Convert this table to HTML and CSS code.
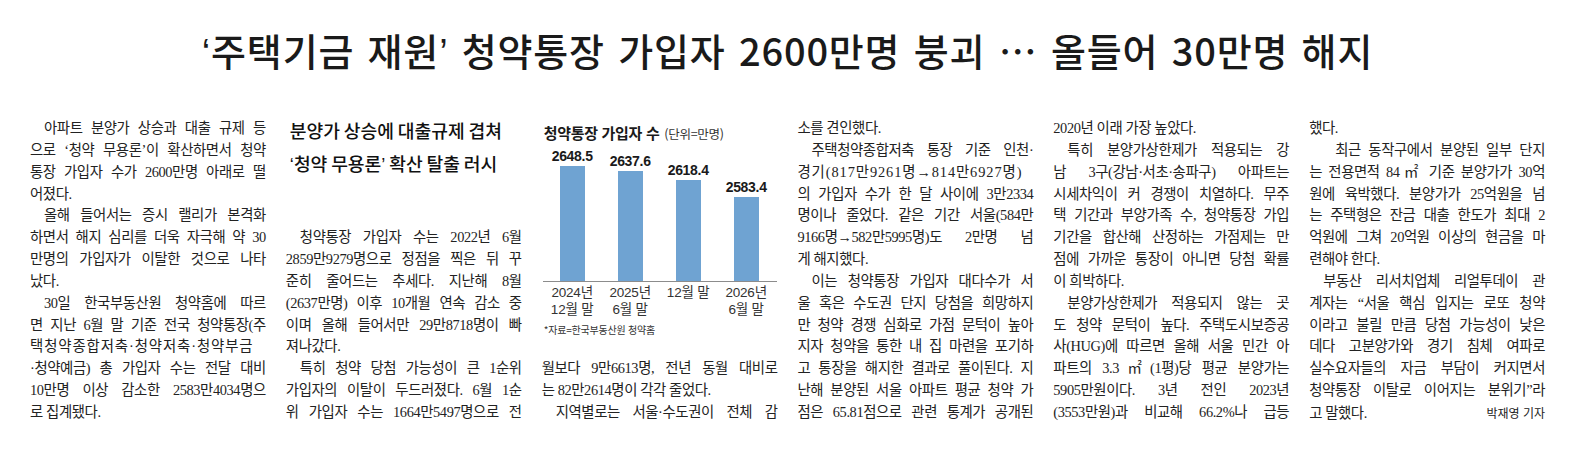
FILE: index.html
```html
<!DOCTYPE html>
<html lang="ko">
<head>
<meta charset="utf-8">
<title>청약통장 가입자 2600만명 붕괴</title>
<link rel="stylesheet" href="styles.css">
</head>
<body>
<div class="page">
  <h1 class="headline"><span class="q">‘</span>주택기금 재원<span class="q">’</span> 청약통장 가입자 2600만명 붕괴 … 올들어 30만명 해지</h1>
  <div class="columns">
    <div class="col">
      <span class="ln ind">아파트 분양가 상승과 대출 규제 등</span>
      <span class="ln">으로 ‘청약 무용론’이 확산하면서 청약</span>
      <span class="ln">통장 가입자 수가 2600만명 아래로 떨</span>
      <span class="ln end">어졌다.</span>
      <span class="ln ind">올해 들어서는 증시 랠리가 본격화</span>
      <span class="ln">하면서 해지 심리를 더욱 자극해 약 30</span>
      <span class="ln">만명의 가입자가 이탈한 것으로 나타</span>
      <span class="ln end">났다.</span>
      <span class="ln ind">30일 한국부동산원 청약홈에 따르</span>
      <span class="ln">면 지난 6월 말 기준 전국 청약통장(주</span>
      <span class="ln spread-lg">택청약종합저축·청약저축·청약부금</span>
      <span class="ln">·청약예금) 총 가입자 수는 전달 대비</span>
      <span class="ln">10만명 이상 감소한 2583만4034명으</span>
      <span class="ln end">로 집계됐다.</span>
    </div>
    <div class="col">
      <h2 class="subhead">분양가 상승에 대출규제 겹쳐<br><span class="q">‘</span>청약 무용론<span class="q">’</span> 확산 탈출 러시</h2>
      <span class="ln ind">청약통장 가입자 수는 2022년 6월</span>
      <span class="ln">2859만9279명으로 정점을 찍은 뒤 꾸</span>
      <span class="ln">준히 줄어드는 추세다. 지난해 8월</span>
      <span class="ln">(2637만명) 이후 10개월 연속 감소 중</span>
      <span class="ln">이며 올해 들어서만 29만8718명이 빠</span>
      <span class="ln end">져나갔다.</span>
      <span class="ln ind">특히 청약 당첨 가능성이 큰 1순위</span>
      <span class="ln">가입자의 이탈이 두드러졌다. 6월 1순</span>
      <span class="ln">위 가입자 수는 1664만5497명으로 전</span>
    </div>
    <div class="col">
      <div class="chart">
        <div class="chart-title">청약통장 가입자 수 <span class="unit">(단위=만명)</span></div>
        <div class="plot">
          <div class="bar-item"><span class="val">2648.5</span><div class="bar" style="height:115px"></div></div>
          <div class="bar-item"><span class="val">2637.6</span><div class="bar" style="height:110px"></div></div>
          <div class="bar-item"><span class="val">2618.4</span><div class="bar" style="height:101px"></div></div>
          <div class="bar-item"><span class="val">2583.4</span><div class="bar" style="height:84px"></div></div>
        </div>
        <div class="xlabels">
          <div class="xl">2024년<br>12월 말</div>
          <div class="xl">2025년<br>6월 말</div>
          <div class="xl">12월 말</div>
          <div class="xl">2026년<br>6월 말</div>
        </div>
        <div class="source">*자료=한국부동산원 청약홈</div>
      </div>
      <span class="ln">월보다 9만6613명, 전년 동월 대비로</span>
      <span class="ln end">는 82만2614명이 각각 줄었다.</span>
      <span class="ln ind">지역별로는 서울·수도권이 전체 감</span>
    </div>
    <div class="col">
      <span class="ln end">소를 견인했다.</span>
      <span class="ln ind">주택청약종합저축 통장 기준 인천·</span>
      <span class="ln spread">경기(817만9261명→814만6927명)</span>
      <span class="ln">의 가입자 수가 한 달 사이에 3만2334</span>
      <span class="ln">명이나 줄었다. 같은 기간 서울(584만</span>
      <span class="ln">9166명→582만5995명)도 2만명 넘</span>
      <span class="ln end">게 해지했다.</span>
      <span class="ln ind">이는 청약통장 가입자 대다수가 서</span>
      <span class="ln">울 혹은 수도권 단지 당첨을 희망하지</span>
      <span class="ln">만 청약 경쟁 심화로 가점 문턱이 높아</span>
      <span class="ln">지자 청약을 통한 내 집 마련을 포기하</span>
      <span class="ln">고 통장을 해지한 결과로 풀이된다. 지</span>
      <span class="ln">난해 분양된 서울 아파트 평균 청약 가</span>
      <span class="ln">점은 65.81점으로 관련 통계가 공개된</span>
    </div>
    <div class="col">
      <span class="ln end">2020년 이래 가장 높았다.</span>
      <span class="ln ind">특히 분양가상한제가 적용되는 강</span>
      <span class="ln">남 3구(강남·서초·송파구) 아파트는</span>
      <span class="ln">시세차익이 커 경쟁이 치열하다. 무주</span>
      <span class="ln">택 기간과 부양가족 수, 청약통장 가입</span>
      <span class="ln">기간을 합산해 산정하는 가점제는 만</span>
      <span class="ln">점에 가까운 통장이 아니면 당첨 확률</span>
      <span class="ln end">이 희박하다.</span>
      <span class="ln ind">분양가상한제가 적용되지 않는 곳</span>
      <span class="ln">도 청약 문턱이 높다. 주택도시보증공</span>
      <span class="ln">사(HUG)에 따르면 올해 서울 민간 아</span>
      <span class="ln">파트의 3.3㎡(1평)당 평균 분양가는</span>
      <span class="ln">5905만원이다. 3년 전인 2023년</span>
      <span class="ln">(3553만원)과 비교해 66.2%나 급등</span>
    </div>
    <div class="col">
      <span class="ln end">했다.</span>
      <span class="ln ind wide">최근 동작구에서 분양된 일부 단지</span>
      <span class="ln">는 전용면적 84㎡ 기준 분양가가 30억</span>
      <span class="ln">원에 육박했다. 분양가가 25억원을 넘</span>
      <span class="ln">는 주택형은 잔금 대출 한도가 최대 2</span>
      <span class="ln">억원에 그쳐 20억원 이상의 현금을 마</span>
      <span class="ln end">련해야 한다.</span>
      <span class="ln ind">부동산 리서치업체 리얼투데이 관</span>
      <span class="ln">계자는 “서울 핵심 입지는 로또 청약</span>
      <span class="ln">이라고 불릴 만큼 당첨 가능성이 낮은</span>
      <span class="ln">데다 고분양가와 경기 침체 여파로</span>
      <span class="ln">실수요자들의 자금 부담이 커지면서</span>
      <span class="ln">청약통장 이탈로 이어지는 분위기”라</span>
      <span class="ln last"><span>고 말했다.</span><span class="byline">박재영 기자</span></span>
    </div>
  </div>
</div>
</body>
</html>
```

FILE: styles.css
```css
* { box-sizing: border-box; }
html, body { margin: 0; padding: 0; background: #ffffff; }
body { width: 1574px; height: 453px; overflow: hidden; }

.page { padding: 28px 29px 0 30px; }

.headline {
  margin: 0;
  height: 44px;
  line-height: 44px;
  text-align: center;
  white-space: nowrap;
  font-family: "Noto Sans CJK KR", "Noto Sans", sans-serif;
  font-weight: 500;
  font-size: 38px;
  letter-spacing: 0.8px;
  word-spacing: 2px;
  color: #1a1a1a;
}

.q { font-family: "Liberation Sans", sans-serif; }

.columns {
  margin-top: 46px;
  display: grid;
  grid-template-columns: repeat(6, 1fr);
  column-gap: 20px;
}

.col {
  font-family: "Liberation Serif", "Noto Sans CJK KR", serif;
  font-size: 14.4px;
  line-height: 21.85px;
  letter-spacing: -0.4px;
  word-spacing: -1.3px;
  color: #222222;
}

.ln {
  display: block;
  text-align: justify;
  text-align-last: justify;
}
.ln.end { text-align-last: left; word-spacing: 0; }
.ln.ind { text-indent: 14px; }
.ln.ind.wide { text-indent: 26px; }
.ln.spread { letter-spacing: 0.9px; }
.ln.spread-lg { letter-spacing: 0.9px; white-space: nowrap; }
.ln.last { display: flex; justify-content: space-between; align-items: baseline; word-spacing: 0; }

.byline {
  font-family: "Noto Sans CJK KR", sans-serif;
  font-size: 12px;
  letter-spacing: 0;
  color: #222;
}

.subhead {
  margin: -4.5px 0 0 0;
  height: 113.75px;
  padding-left: 4px;
  white-space: nowrap;
  font-family: "Noto Sans CJK KR", sans-serif;
  font-weight: 500;
  font-size: 18.2px;
  line-height: 33px;
  letter-spacing: 0;
  color: #111111;
}

.chart {
  height: 240.35px;
  display: flex;
  flex-direction: column;
}
.chart-title {
  margin-top: 5px;
  height: 20px;
  line-height: 20px;
  padding-left: 2px;
  font-family: "Noto Sans CJK KR", sans-serif;
  font-weight: 700;
  font-size: 15px;
  letter-spacing: -0.3px;
  word-spacing: 0;
  color: #1a1a1a;
}
.unit {
  font-weight: 400;
  font-size: 12.5px;
  margin-left: 1px;
  color: #333;
}
.plot {
  height: 139px;
  margin-left: 1.5px;
  display: flex;
  align-items: flex-end;
  border-bottom: 1px solid #8c8c8c;
}
.bar-item {
  width: 58px;
  display: flex;
  flex-direction: column;
  align-items: center;
}
.val {
  font-family: "Liberation Sans", "Noto Sans", sans-serif;
  font-weight: 700;
  font-size: 14px;
  line-height: 16px;
  letter-spacing: -0.3px;
  margin-bottom: 2px;
  color: #1a1a1a;
}
.bar {
  width: 25px;
  background: #6fa3d2;
}
.xlabels {
  display: flex;
  margin-left: 1.5px;
  margin-top: 2px;
}
.xl {
  width: 58px;
  text-align: center;
  font-family: "Liberation Sans", "Noto Sans CJK KR", sans-serif;
  font-size: 13.5px;
  line-height: 17px;
  letter-spacing: -0.2px;
  word-spacing: 0;
  color: #333;
}
.source {
  margin-top: 5px;
  padding-left: 2px;
  font-family: "Noto Sans CJK KR", sans-serif;
  font-size: 10px;
  line-height: 14px;
  letter-spacing: -0.2px;
  word-spacing: 0;
  color: #333;
}
```
